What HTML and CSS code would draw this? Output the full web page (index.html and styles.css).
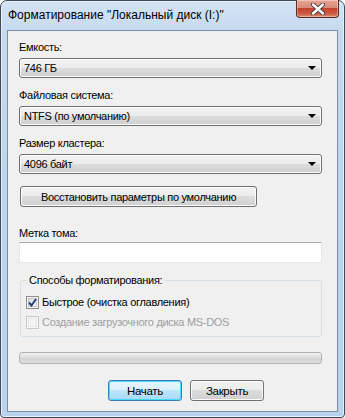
FILE: index.html
```html
<!DOCTYPE html>
<html lang="ru">
<head>
<meta charset="utf-8">
<title>Форматирование</title>
<link rel="stylesheet" href="styles.css">
</head>
<body>
<div class="window">
  <div class="titlebar">
    <span class="title">Форматирование "Локальный диск (I:)"</span>
    <div class="close">
      <svg width="16" height="12" viewBox="0 0 16 12">
        <path d="M3 1.5 L13 10.5 M13 1.5 L3 10.5" stroke="#3a3a3a" stroke-width="4.2" stroke-linecap="round"/>
        <path d="M3 1.5 L13 10.5 M13 1.5 L3 10.5" stroke="#ffffff" stroke-width="2.4" stroke-linecap="round"/>
      </svg>
    </div>
  </div>
  <div class="client">
    <div class="label first">Емкость:</div>
    <div class="combo"><span>746 ГБ</span><i class="arrow"></i></div>
    <div class="label">Файловая система:</div>
    <div class="combo"><span>NTFS (по умолчанию)</span><i class="arrow"></i></div>
    <div class="label">Размер кластера:</div>
    <div class="combo"><span>4096 байт</span><i class="arrow"></i></div>
    <div class="btn restore">Восстановить параметры по умолчанию</div>
    <div class="label vol">Метка тома:</div>
    <div class="input"></div>
    <div class="group">
      <span class="legend">Способы форматирования:</span>
      <div class="check">
        <span class="box checked">
          <svg width="9" height="9" viewBox="0 0 9 9"><path d="M1 4.5 L3.5 7.5 L8 1" fill="none" stroke="#2b3f77" stroke-width="2"/></svg>
        </span>
        <span>Быстрое (очистка оглавления)</span>
      </div>
      <div class="check disabled">
        <span class="box"></span>
        <span>Создание загрузочного диска MS-DOS</span>
      </div>
    </div>
    <div class="progress"></div>
    <div class="actions">
      <div class="btn primary">Начать</div>
      <div class="btn">Закрыть</div>
    </div>
  </div>
</div>
</body>
</html>
```
FILE: styles.css
```css
html, body {
  margin: 0;
  padding: 0;
  background: #ffffff;
}
body {
  width: 345px;
  height: 418px;
  overflow: hidden;
  font-family: "Liberation Sans", Arial, sans-serif;
  font-size: 11px;
  letter-spacing: -0.3px;
  color: #000;
}
.window {
  box-sizing: border-box;
  width: 345px;
  height: 418px;
  border: 1px solid #3f4a58;
  border-radius: 7px 7px 4px 4px;
  background: linear-gradient(#d3e3f4 0px, #c6daef 30px, #bcd4ee 200px, #b9d2ee 418px);
  box-shadow: inset 0 0 0 1px #e6f0fa;
  display: flex;
  flex-direction: column;
}
.titlebar {
  height: 29px;
  position: relative;
  display: flex;
  align-items: center;
}
.title {
  padding-left: 7px;
  padding-bottom: 1px;
  font-size: 12px;
  letter-spacing: 0;
  color: #000;
  white-space: nowrap;
}
.close {
  position: absolute;
  top: -1px;
  right: 5px;
  width: 43px;
  height: 18px;
  box-sizing: border-box;
  border: 1px solid #5b2a25;
  border-top: none;
  border-radius: 0 0 4px 4px;
  background: linear-gradient(#e8a493 0%, #d98b78 45%, #c4432d 50%, #cd5a40 80%, #db8a6f 100%);
  box-shadow: inset 0 0 0 1px rgba(255,255,255,0.35);
  display: flex;
  align-items: center;
  justify-content: center;
}
.client {
  margin: 0 6px 0 6px;
  height: 382px;
  box-sizing: border-box;
  border: 1px solid #7b8ea8;
  background: #f0f0f0;
  padding: 0 0 0 11px;
  display: flex;
  flex-direction: column;
}
.label {
  height: 15px;
  line-height: 15px;
  margin-top: 10px;
  margin-left: 0;
}
.label.first { margin-top: 9px; }
.combo {
  margin-top: 3px;
  width: 303px;
  height: 20px;
  box-sizing: border-box;
  border: 1px solid #707070;
  border-radius: 3px;
  background: linear-gradient(#f2f2f2 0%, #ebebeb 50%, #dddddd 50%, #cfcfcf 100%);
  box-shadow: inset 0 0 0 1px #fbfbfb;
  display: flex;
  align-items: center;
  padding-left: 4px;
  position: relative;
}
.combo span { line-height: 16px; }
.arrow {
  position: absolute;
  right: 5px;
  top: 7px;
  width: 0;
  height: 0;
  border-left: 4px solid transparent;
  border-right: 4px solid transparent;
  border-top: 4px solid #000;
}
.btn {
  height: 21px;
  box-sizing: border-box;
  border: 1px solid #707070;
  border-radius: 3px;
  background: linear-gradient(#f2f2f2 0%, #ebebeb 50%, #dddddd 50%, #cfcfcf 100%);
  box-shadow: inset 0 0 0 1px #fcfcfc;
  display: flex;
  align-items: center;
  justify-content: center;
  white-space: nowrap;
  font-size: 11.5px;
}
.restore {
  margin-top: 12px;
  margin-left: 1px;
  width: 237px;
  font-size: 11px;
}
.label.vol { margin-top: 19px; }
.input {
  margin-top: 1px;
  width: 303px;
  height: 21px;
  box-sizing: border-box;
  background: #fff;
  border: 1px solid #e3e9ef;
  border-top-color: #abadb3;
}
.group {
  margin-top: 17px;
  margin-left: 1px;
  width: 302px;
  height: 57px;
  box-sizing: border-box;
  border: 1px solid #d5dfe5;
  border-radius: 3px;
  position: relative;
  padding: 13px 0 0 5px;
}
.legend {
  position: absolute;
  top: -8px;
  left: 5px;
  padding: 0 3px;
  background: #f0f0f0;
  line-height: 15px;
}
.check {
  display: flex;
  align-items: center;
  height: 16px;
  gap: 3px;
  margin-bottom: 4px;
}
.box {
  width: 13px;
  height: 13px;
  box-sizing: border-box;
  border: 1px solid #8f8f8f;
  background: linear-gradient(135deg, #dcdcdc 0%, #f4f4f4 60%, #ffffff 100%);
  box-shadow: inset 0 0 0 1px #f4f4f4, inset 0 0 0 2px #c8c8c8;
  display: flex;
  align-items: center;
  justify-content: center;
}
.box.checked {
  background: linear-gradient(135deg, #cbd0e0 0%, #eef0f6 60%, #ffffff 100%);
}
.box svg { display: block; }
.check.disabled { color: #a0a0a0; }
.check.disabled .box {
  border-color: #c9c9c9;
  background: #f4f4f4;
  box-shadow: inset 0 0 0 1px #f7f7f7, inset 0 0 0 2px #e6e6e6;
}
.progress {
  margin-top: 15px;
  width: 303px;
  height: 12px;
  box-sizing: border-box;
  border: 1px solid #b2b2b2;
  border-radius: 3px;
  background: linear-gradient(#f0f0f0 0%, #e0e0e0 40%, #d4d4d4 60%, #dedede 100%);
}
.actions {
  margin-top: 16px;
  display: flex;
  gap: 8px;
  padding-left: 89px;
}
.actions .btn {
  width: 74px;
}
.btn.primary {
  border-color: #3c7fb1;
  background: linear-gradient(#eaf6fd 0%, #d9f0fc 50%, #bee6fd 50%, #a7d9f5 100%);
  box-shadow: inset 0 0 0 1px #48d9fe;
}
```
